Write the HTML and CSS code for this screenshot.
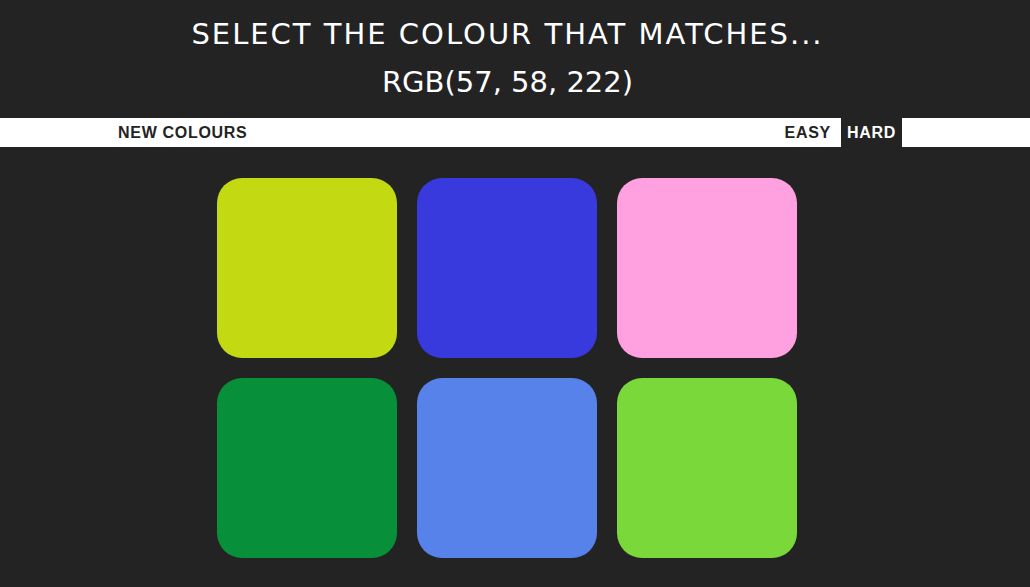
FILE: index.html
```html
<!DOCTYPE html>
<html>
<head>
<meta charset="utf-8">
<link rel="stylesheet" href="styles.css">
</head>
<body>
<h1 class="title"><span class="prompt">SELECT THE COLOUR THAT MATCHES...</span><br><span class="target">RGB(57, 58, 222)</span></h1>
<nav class="stripe">
  <button class="btn">NEW COLOURS</button>
  <div class="modes">
    <button class="btn">EASY</button>
    <button class="btn selected">HARD</button>
  </div>
</nav>
<main class="board">
  <div class="square" style="background:#c3d912"></div>
  <div class="square" style="background:#393ade"></div>
  <div class="square" style="background:#ffa0e0"></div>
  <div class="square" style="background:#078f3a"></div>
  <div class="square" style="background:#5682e9"></div>
  <div class="square" style="background:#7ad83b"></div>
</main>
</body>
</html>
```
FILE: styles.css
```css
html, body {
  margin: 0;
  padding: 0;
  background: #232323;
  width: 1030px;
  height: 587px;
  overflow: hidden;
}
.title {
  margin: 0;
  padding: 10px 15px 12px 0;
  color: #ffffff;
  text-align: center;
  font-family: "DejaVu Sans", sans-serif;
  font-weight: normal;
  font-size: 29px;
  line-height: 48px;
}
.prompt {
  letter-spacing: 2px;
}
.stripe {
  height: 29px;
  background: #ffffff;
  display: flex;
  justify-content: space-between;
  align-items: stretch;
  padding: 0 128px 0 112px;
}
.modes {
  display: flex;
  gap: 4px;
}
.btn {
  border: none;
  background: #ffffff;
  color: #232323;
  font-family: "Liberation Sans", Arial, sans-serif;
  font-weight: bold;
  font-size: 16px;
  letter-spacing: 0.7px;
  padding: 0 6px;
  margin: 0;
  height: 29px;
  line-height: 29px;
}
.btn.selected {
  background: #232323;
  color: #ffffff;
}
.board {
  display: grid;
  grid-template-columns: repeat(3, 180px);
  grid-auto-rows: 180px;
  gap: 20px;
  margin: 31px 0 0 217px;
}
.square {
  border-radius: 25px;
}
```
